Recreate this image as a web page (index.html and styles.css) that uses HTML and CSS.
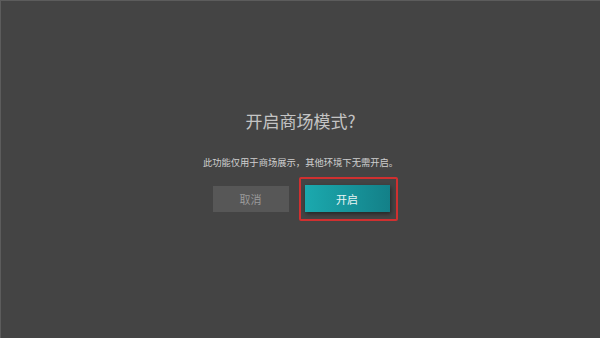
FILE: index.html
```html
<!DOCTYPE html>
<html lang="zh-CN">
<head>
    <meta charset="UTF-8">
    <meta name="viewport" content="width=device-width, initial-scale=1.0">
    <title>商场模式</title>
    <link rel="stylesheet" href="styles.css">
</head>
<body>
    <section class="dialog">
        <h1 class="title">开启商场模式?</h1>
        <p class="desc">此功能仅用于商场展示，其他环境下无需开启。</p>
        <div class="actions">
            <button class="btn cancel">取消</button>
            <div class="focus">
                <button class="btn ok">开启</button>
            </div>
        </div>
    </section>
</body>
</html>
```

FILE: styles.css
```css
body {
    margin: 0;
    width: 600px;
    height: 338px;
    box-sizing: border-box;
    background-color: #444444;
    border-top: 1px solid #5c5c5c;
    border-left: 1px solid #5c5c5c;
    font-family: "Noto Sans CJK SC", "Noto Sans", sans-serif;
    display: flex;
    justify-content: center;
}

.dialog {
    display: flex;
    flex-direction: column;
    align-items: center;
    padding-top: 108px;
}

.title {
    margin: 0;
    font-size: 17px;
    font-weight: normal;
    line-height: 24px;
    color: #c4c4c4;
}

.desc {
    margin: 22px 0 0 0;
    font-size: 9.3px;
    line-height: 14px;
    color: #cfcfcf;
}

.actions {
    display: flex;
    align-items: center;
    margin-top: 8px;
    margin-left: 9px;
}

.btn {
    all: unset;
    height: 26px;
    display: flex;
    align-items: center;
    justify-content: center;
    font-size: 11px;
}

.cancel {
    width: 76px;
    background: #575757;
    color: #9a9a9a;
}

.focus {
    margin-left: 10px;
    border: 2px solid #d03030;
    border-radius: 2px;
    padding: 6px 6px 7px 4px;
}

.ok {
    width: 85px;
    height: 27px;
    color: #e8f4f4;
    background: linear-gradient(90deg, #1ba9ae, #138088);
    box-shadow: 1px 2px 4px rgba(0, 0, 0, 0.45);
}
```
